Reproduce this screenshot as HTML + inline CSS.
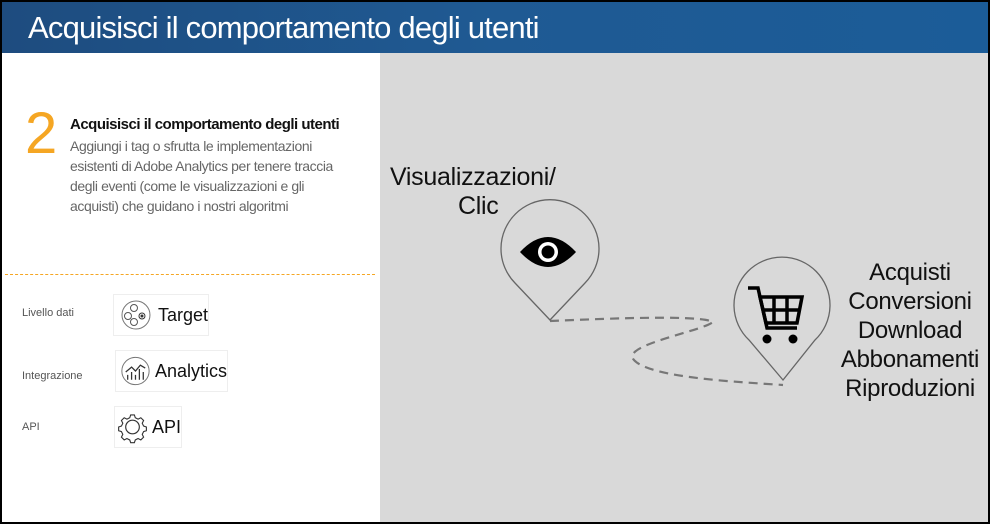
<!DOCTYPE html>
<html><head><meta charset="utf-8"><style>
*{margin:0;padding:0;box-sizing:border-box}
body{width:990px;height:524px;background:#000;position:relative;overflow:hidden;font-family:"Liberation Sans",sans-serif}
#hdr{position:absolute;left:2px;top:2px;width:986px;height:51px;background:linear-gradient(90deg,#1e4c7f,#1f5a93 50%,#1b5c98)}
#hdr div{position:absolute;left:26px;top:8px;color:#fff;font-size:31px;letter-spacing:-0.8px}
#left{position:absolute;left:2px;top:53px;width:378px;height:469px;background:#fff}
#right{position:absolute;left:380px;top:53px;width:608px;height:469px;background:#d9d9d9}
.num{position:absolute;left:23px;font-size:58px;color:#f5a623}
.t{position:absolute;left:68px;font-size:15px;font-weight:bold;color:#111;letter-spacing:-0.5px}
.b{position:absolute;left:68px;white-space:nowrap;font-size:14px;line-height:20px;color:#666;letter-spacing:-0.4px}
.dash{position:absolute;left:5px;top:274px;width:370px;border-top:1.5px dashed #f5a623}
.lab{position:absolute;left:22px;font-size:11px;color:#555}
.box{position:absolute;border:1px solid #eee;background:#fff;font-size:18px;color:#111;display:flex;align-items:center}
.rt{position:absolute;font-size:24px;color:#111;text-align:center;line-height:29px;letter-spacing:-0.3px}
</style></head><body>
<div id="hdr"><div>Acquisisci il comportamento degli utenti</div></div>
<div id="left">
<div class="num" style="top:47px">2</div>
<div class="t" style="top:63px">Acquisisci il comportamento degli utenti</div>
<div class="b" style="top:83px">Aggiungi i tag o sfrutta le implementazioni<br>esistenti di Adobe Analytics per tenere traccia<br>degli eventi (come le visualizzazioni e gli<br>acquisti) che guidano i nostri algoritmi</div>
</div>
<div class="dash"></div>
<div class="lab" style="top:307px">Livello dati</div>
<div class="lab" style="top:370px">Integrazione</div>
<div class="lab" style="top:421px">API</div>
<div class="box" style="left:113px;top:294px;width:96px;height:42px">
<svg width="44" height="34" viewBox="0 0 44 34"><circle cx="22" cy="17" r="14" fill="none" stroke="#777" stroke-width="1"/><circle cx="20" cy="10" r="3.5" fill="none" stroke="#555"/><circle cx="14" cy="18" r="3.5" fill="none" stroke="#555"/><circle cx="20" cy="24" r="3.5" fill="none" stroke="#555"/><circle cx="28" cy="18" r="3" fill="none" stroke="#333"/><circle cx="28" cy="18" r="1.5" fill="#333"/></svg>Target</div>
<div class="box" style="left:115px;top:350px;width:113px;height:42px">
<svg width="40" height="34" viewBox="0 0 40 34"><circle cx="20" cy="17" r="14" fill="none" stroke="#777"/><path d="M12 26v-5M16 26v-8M20 26v-5M24 26v-11M28 26v-8M10 18l6-5 4 4 5-6 5 3" fill="none" stroke="#333" stroke-width="1.3"/></svg>Analytics</div>
<div class="box" style="left:114px;top:406px;width:68px;height:42px">
<svg width="38" height="34" viewBox="0 0 38 34"><g transform="translate(18 17)" fill="none" stroke="#333" stroke-width="1.2"><circle r="7"/><path d="M-2 -13h4l1 3 3 1.5 3-1.5 3 3-1.5 3 1.5 3 3 1v4l-3 1-1.5 3 1.5 3-3 3-3-1.5-3 1.5-1 3h-4l-1-3-3-1.5-3 1.5-3-3 1.5-3-1.5-3-3-1v-4l3-1 1.5-3-1.5-3 3-3 3 1.5 3-1.5z" transform="scale(0.95)"/></g></svg>API</div>
<div id="right"></div>
<div class="rt" style="left:390px;top:163px;text-align:left;font-size:25px">Visualizzazioni/<br><span style="margin-left:68px">Clic</span></div>
<div class="rt" style="left:835px;top:258px;width:150px">Acquisti<br>Conversioni<br>Download<br>Abbonamenti<br>Riproduzioni</div>
<svg style="position:absolute;left:0;top:0" width="990" height="524">
<path d="M550 321 C620 318 700 315 713 322 C700 332 620 345 634 360 C650 378 740 382 783 385" fill="none" stroke="#777" stroke-width="2.2" stroke-dasharray="9 6"/>
<path d="M550 320 L515 283 A49 49 0 1 1 585 283 Z" fill="none" stroke="#666" stroke-width="1.3"/>
<path d="M520 252 Q548 222 576 252 Q548 282 520 252Z" fill="#000"/><circle cx="548" cy="252" r="10" fill="#fff"/><circle cx="548" cy="252" r="6.5" fill="#000"/>
<path d="M783 380 L749 340 A48 48 0 1 1 815 340 Z" fill="none" stroke="#666" stroke-width="1.3"/>
<g fill="none" stroke="#000" stroke-width="3.5"><path d="M748 288h10l9 40h30"/><path d="M760 297h42l-5 26h-31z"/><path d="M774 297v26M787 297v26M762 310h38"/></g>
<circle cx="767" cy="339" r="4.5"/><circle cx="793" cy="339" r="4.5"/>
</svg>
</body></html>
